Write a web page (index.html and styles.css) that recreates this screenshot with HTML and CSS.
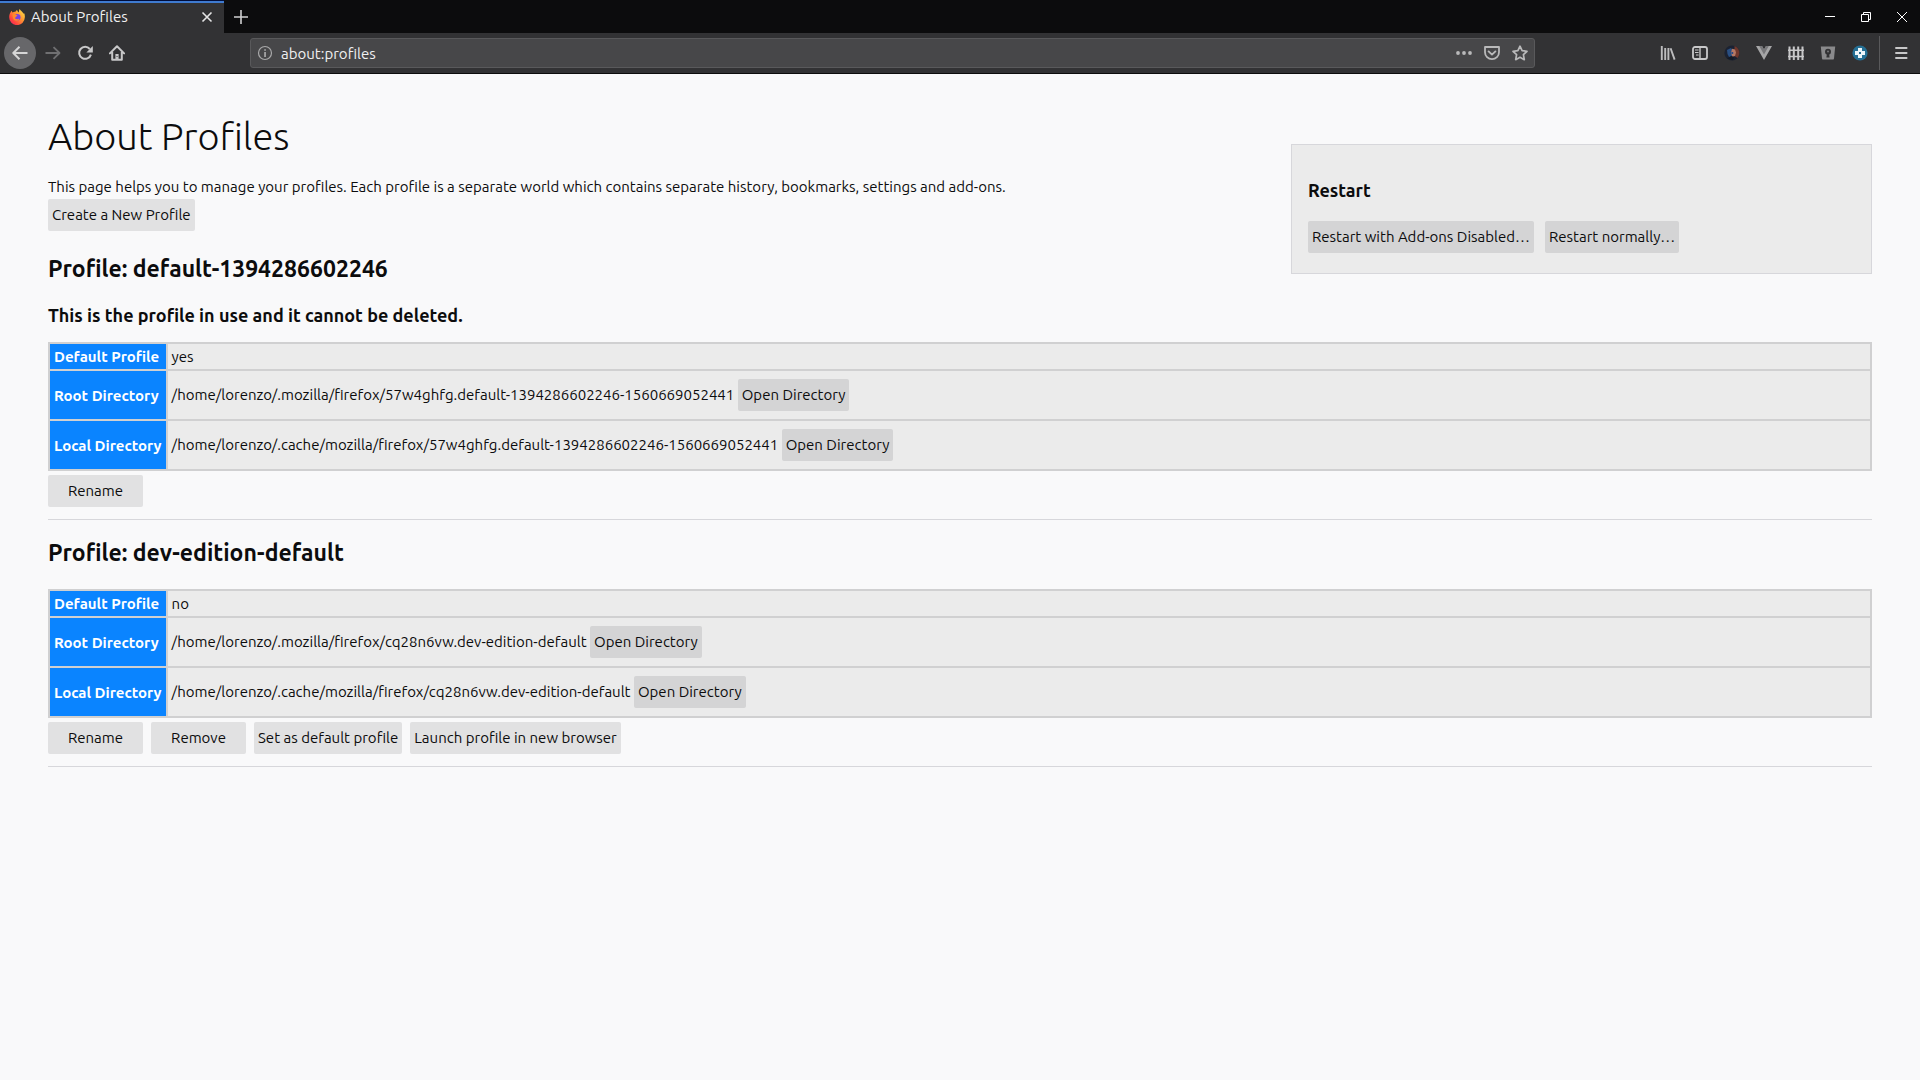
FILE: index.html
```html
<!DOCTYPE html>
<html lang="en">
<head>
<meta charset="UTF-8">
<meta name="viewport" content="width=device-width, initial-scale=1.0">
<title>About Profiles</title>
<link rel="stylesheet" href="styles.css">
</head>
<body>

<header class="browser">
    <div class="tab-bar">
        <div class="tab">
            <svg class="favicon" width="16" height="16" viewBox="0 0 16 16">
                <defs>
                    <linearGradient id="flame" x1="1" y1="0" x2="0" y2="1">
                        <stop offset="0" stop-color="#fff04f"/>
                        <stop offset="0.4" stop-color="#ff9a30"/>
                        <stop offset="0.75" stop-color="#ff4040"/>
                        <stop offset="1" stop-color="#e9207c"/>
                    </linearGradient>
                </defs>
                <path d="M1.6 3.2 C1.8 2.6 2.4 2 2.7 1.8 C2.8 2.6 3.2 3.1 3.6 3.4 C4.6 2.8 5.2 2.7 6.2 2.9 C6.8 1.8 7.4 1.3 8.2 1 C8 2 8.6 2.6 10 3.4 C10 2 10 1 10.6 0 C11.6 1.8 13.6 2.8 14.6 4.8 C15 4.6 15 4.2 14.9 3.8 C15.8 5.4 16 7 15.8 8.6 A7.8 7.6 0 0 1 .2 8.4 C.1 6.4 .6 4.8 1.6 3.2z" fill="url(#flame)"/>
                <circle cx="8.2" cy="8.3" r="3.3" fill="#7542e5"/>
                <path d="M3.4 5.4 C5 4.8 6.6 5 7.4 6 C8.6 6 8.8 6.8 7.6 7.2 C6.6 7.6 6.6 8.8 5.8 9 C7 10.6 9.4 10.4 10.4 9.4 C9.6 12.6 4.8 12.6 4 9z" fill="#ff8a2c"/>
            </svg>
            <span class="tab-title">About Profiles</span>
            <button class="tab-close" aria-label="Close tab">
                <svg width="16" height="16" viewBox="0 0 16 16"><path d="M3.5 3.5l9 9M12.5 3.5l-9 9" stroke="#e4e4e5" stroke-width="1.6" fill="none"/></svg>
            </button>
        </div>
        <button class="new-tab" aria-label="New tab">
            <svg width="16" height="16" viewBox="0 0 16 16"><path d="M8 1v14M1 8h14" stroke="#d0d0d1" stroke-width="1.6" fill="none"/></svg>
        </button>
        <div class="window-controls">
            <button aria-label="Minimize"><svg width="12" height="12" viewBox="0 0 12 12"><path d="M1 5.5h10" stroke="#fff"/></svg></button>
            <button aria-label="Restore"><svg width="12" height="12" viewBox="0 0 12 12"><path d="M1.5 3.5h7v7h-7zM3.5 3.5v-2h7v7h-2" stroke="#fff" fill="none"/></svg></button>
            <button aria-label="Close"><svg width="12" height="12" viewBox="0 0 12 12"><path d="M1 1l10 10M11 1L1 11" stroke="#fff" fill="none"/></svg></button>
        </div>
    </div>

    <nav class="nav-bar">
        <button class="nav-button back" aria-label="Back">
            <svg width="16" height="16" viewBox="0 0 16 16"><path d="M15.5 8H1.5M7.5 1.8L1.3 8l6.2 6.2" stroke="#d6d6d7" stroke-width="2" fill="none" stroke-linejoin="round"/></svg>
        </button>
        <button class="nav-button" aria-label="Forward">
            <svg width="16" height="16" viewBox="0 0 16 16"><path d="M.5 8h14M8.5 2.2L14.5 8l-6 5.8" stroke="#707072" stroke-width="1.8" fill="none" stroke-linejoin="round"/></svg>
        </button>
        <button class="nav-button" aria-label="Reload">
            <svg width="16" height="16" viewBox="0 0 16 16"><path d="M12.8 4A6 6 0 1 0 13.9 9.6" stroke="#c8c8c9" stroke-width="2" fill="none"/><path d="M15.8 1v6.4H9.4z" fill="#c8c8c9"/></svg>
        </button>
        <button class="nav-button" aria-label="Home">
            <svg width="16" height="16" viewBox="0 0 16 16"><path d="M.9 8.4L8 1.3l7.1 7.1M3.2 7.2v7.6h9.6V7.2" stroke="#c8c8c9" stroke-width="2" fill="none" stroke-linejoin="round" stroke-linecap="round"/><path d="M6.4 14V9h3.2v5z" fill="#c8c8c9"/><path d="M7.6 11h.9v1h-.9z" fill="#323234"/></svg>
        </button>

        <div class="url-bar">
            <svg width="16" height="16" viewBox="0 0 16 16"><circle cx="8" cy="8" r="6.5" stroke="#a9a9aa" stroke-width="1.2" fill="none"/><path d="M7.2 7h1.7v5H7.2zM7.2 4.2h1.7v1.6H7.2z" fill="#a9a9aa"/></svg>
            <input type="text" aria-label="Address" value="about:profiles">
            <button class="url-button" aria-label="Page actions">
                <svg width="16" height="16" viewBox="0 0 16 16"><circle cx="2" cy="8" r="1.9" fill="#b9b9ba"/><circle cx="8" cy="8" r="1.9" fill="#b9b9ba"/><circle cx="14" cy="8" r="1.9" fill="#b9b9ba"/></svg>
            </button>
            <button class="url-button" aria-label="Save to Pocket">
                <svg width="16" height="16" viewBox="0 0 16 16"><path d="M1 2h14v5.2a7 7 0 0 1-14 0z" stroke="#b9b9ba" stroke-width="1.8" fill="none" stroke-linejoin="round"/><path d="M4.6 6.4L8 9.6l3.4-3.2" stroke="#b9b9ba" stroke-width="1.9" fill="none" stroke-linecap="round" stroke-linejoin="round"/></svg>
            </button>
            <button class="url-button" aria-label="Bookmark this page">
                <svg width="16" height="16" viewBox="0 0 16 16"><path d="M8 1.2l2.1 4.5 4.9.6-3.6 3.4.9 5L8 12.3l-4.3 2.4.9-5L1 6.3l4.9-.6z" stroke="#b9b9ba" stroke-width="1.7" fill="none" stroke-linejoin="round"/></svg>
            </button>
        </div>

        <button class="nav-button" aria-label="Library">
            <svg width="16" height="16" viewBox="0 0 16 16"><path d="M1.8 1v14M5.2 3v12M8.4 3v12M10.6 3.2l4 11.4" stroke="#bcbcbd" stroke-width="1.9" fill="none"/></svg>
        </button>
        <button class="nav-button" aria-label="Sidebars">
            <svg width="16" height="16" viewBox="0 0 16 16"><rect x="1" y="2" width="14" height="12" rx="2" stroke="#c8c8c9" stroke-width="1.8" fill="none"/><path d="M8 2v12" stroke="#c8c8c9" stroke-width="1.4"/><path d="M3 5h3.6M3 7.5h3.6M4 10h2.6" stroke="#c8c8c9"/></svg>
        </button>
        <button class="nav-button" aria-label="Account">
            <svg width="16" height="16" viewBox="0 0 16 16"><circle cx="8" cy="8" r="7.6" fill="#1b2232"/><path d="M10.5 1a7.5 7.5 0 0 1 3 12l-3-2z" fill="#70372c"/><path d="M3 5l4-2 2 3-1 5-3 1-1.5-3z" fill="#294f83"/><path d="M8 3.8l3 .6 1 3-1 3.6-2.6.8L7 8z" fill="#b67965"/><path d="M7.4 7h1.8v2H7.4z" fill="#2b4b88"/><path d="M3 13.5l4-2.3 3 .8-1 3.2z" fill="#141a26"/></svg>
        </button>
        <button class="nav-button" aria-label="Vue devtools">
            <svg width="16" height="16" viewBox="0 0 16 16"><path d="M0 1h6l2 3.4L10 1h6L8 15z" fill="#a6a6a7"/><path d="M3.2 1H6l2 3.4L10 1h2.8L8 9.4z" fill="#77777a"/></svg>
        </button>
        <button class="nav-button" aria-label="Containers">
            <svg width="16" height="16" viewBox="0 0 16 16"><path d="M1.5 1.5v13.5M5.8 1.5v13.5M10.2 1.5v13.5M14.5 1.5v13.5" stroke="#c8c8c9" stroke-width="2"/><path d="M0 5.2h16M0 11.5h16" stroke="#c8c8c9" stroke-width="1.4"/></svg>
        </button>
        <button class="nav-button" aria-label="Password manager">
            <svg width="16" height="16" viewBox="0 0 16 16"><path d="M.8 1.6h14.4L14 13.4q-.2 1.2-1.4 1.2H3.4Q2.2 14.6 2 13.4z" fill="#8a8a8c"/><circle cx="8" cy="6.8" r="3" fill="#323234"/><path d="M7 8h2l.6 4.6H6.4z" fill="#323234"/><circle cx="8" cy="6.6" r="1" fill="#77777a"/></svg>
        </button>
        <button class="nav-button" aria-label="Extension">
            <svg width="16" height="16" viewBox="0 0 16 16"><circle cx="8" cy="8" r="7.6" fill="#256f94"/><path d="M6 3h4v3h3v4h-3v3H6v-3H3V6h3z" fill="#eef6fa"/><path d="M7 7h2v2H7z" fill="#256f94"/></svg>
        </button>
        <span class="separator"></span>
        <button class="nav-button" aria-label="Menu">
            <svg width="16" height="16" viewBox="0 0 16 16"><path d="M3 3h10.6M3 8h10.6M3 13h10.6" stroke="#c8c8c9" stroke-width="1.9" stroke-linecap="round"/></svg>
        </button>
    </nav>
</header>

<main class="content">
    <section class="restart-box">
        <h3>Restart</h3>
        <div class="actions">
            <button>Restart with Add-ons Disabled…</button>
            <button>Restart normally…</button>
        </div>
    </section>

    <h1>About Profiles</h1>
    <p class="intro">This page helps you to manage your profiles. Each profile is a separate world which contains separate history, bookmarks, settings and add-ons.</p>
    <div class="create">
        <button>Create a New Profile</button>
    </div>

    <section class="profile">
        <h2>Profile: default-1394286602246</h2>
        <h3>This is the profile in use and it cannot be deleted.</h3>
        <table>
            <tr>
                <th scope="row">Default Profile</th>
                <td>yes</td>
            </tr>
            <tr>
                <th scope="row">Root Directory</th>
                <td>/home/lorenzo/.mozilla/firefox/57w4ghfg.default-1394286602246-1560669052441 <button>Open Directory</button></td>
            </tr>
            <tr>
                <th scope="row">Local Directory</th>
                <td>/home/lorenzo/.cache/mozilla/firefox/57w4ghfg.default-1394286602246-1560669052441 <button>Open Directory</button></td>
            </tr>
        </table>
        <div class="actions">
            <button>Rename</button>
        </div>
    </section>

    <section class="profile">
        <h2>Profile: dev-edition-default</h2>
        <table>
            <tr>
                <th scope="row">Default Profile</th>
                <td>no</td>
            </tr>
            <tr>
                <th scope="row">Root Directory</th>
                <td>/home/lorenzo/.mozilla/firefox/cq28n6vw.dev-edition-default <button>Open Directory</button></td>
            </tr>
            <tr>
                <th scope="row">Local Directory</th>
                <td>/home/lorenzo/.cache/mozilla/firefox/cq28n6vw.dev-edition-default <button>Open Directory</button></td>
            </tr>
        </table>
        <div class="actions">
            <button>Rename</button>
            <button>Remove</button>
            <button>Set as default profile</button>
            <button>Launch profile in new browser</button>
        </div>
    </section>
</main>

</body>
</html>
```
FILE: styles.css
```css
* {
    box-sizing: border-box;
}
body {
    margin: 0;
    background-color: #f9f9fa;
    color: #0c0c0d;
    font-family: Ubuntu, "Open Sans", sans-serif;
    font-size: 15px;
}
button {
    font-family: inherit;
    font-size: 15px;
    color: inherit;
    border: none;
    cursor: pointer;
}

/* Browser chrome */
.browser {
    background-color: #323234;
    border-bottom: 1px solid #0c0c0d;
}
.browser button {
    display: flex;
    align-items: center;
    justify-content: center;
    padding: 0;
    background: none;
}
.browser svg {
    flex: none;
}
.tab-bar {
    display: flex;
    height: 33px;
    background-color: #0c0c0d;
}
.tab {
    display: flex;
    align-items: center;
    width: 224px;
    padding: 0 9px;
    background-color: #323234;
    box-shadow: inset 0 1px #000d3a, inset 0 3px #3f7bd0;
    color: #f0f0f1;
}
.tab-title {
    flex: 1;
    margin-left: 6px;
}
.new-tab {
    width: 34px;
}
.window-controls {
    display: flex;
    margin-left: auto;
}
.window-controls button {
    width: 36px;
}
.nav-bar {
    display: flex;
    align-items: center;
    height: 40px;
    padding: 0 3px 0 4px;
}
.nav-button {
    flex: none;
    width: 32px;
    height: 32px;
}
.browser .back {
    margin-right: 1px;
    border-radius: 50%;
    background-color: #67676a;
}
.url-bar {
    display: flex;
    flex: 1;
    align-items: center;
    height: 30px;
    margin: 0 117px;
    padding: 0 0 0 6px;
    border: 1px solid #59595b;
    border-radius: 3px;
    background-color: #474749;
}
.url-bar input {
    flex: 1;
    min-width: 0;
    padding: 0 8px;
    border: none;
    background: none;
    color: #f0f0f1;
    font-family: inherit;
    font-size: 15px;
}
.url-button {
    width: 28px;
    height: 28px;
}
.separator {
    width: 1px;
    height: 34px;
    margin: 0 5px 0 3px;
    background-color: #59595b;
}

/* Page */
.content {
    padding: 38px 48px;
}
.content button {
    height: 32px;
    padding: 0 4px 1px;
    border-radius: 2px;
    background-color: #e1e1e2;
}
h1 {
    margin: 0 0 15px;
    font-size: 38px;
    font-weight: 300;
    line-height: 48px;
}
h2 {
    margin: 17px 0 20px;
    font-size: 23px;
    line-height: 32px;
}
h3 {
    margin: 0 0 17px;
    font-size: 18px;
    line-height: 20px;
}
.intro {
    margin: 0;
    line-height: 24px;
}
.create {
    padding-bottom: 5px;
}
.create button {
    display: block;
}
.actions {
    display: flex;
    gap: 8px;
}
.restart-box {
    float: right;
    width: 30%;
    min-width: 581px;
    margin-top: 32px;
    padding: 35px 16px 20px;
    border: 1px solid #d7d7db;
    background-color: #ebebeb;
}
.restart-box h3 {
    margin-bottom: 21px;
}
.restart-box .actions {
    gap: 11px;
}
.content .restart-box button,
.content td button {
    background-color: #d4d4d5;
}
.profile {
    border-bottom: 1px solid #d7d7db;
}
.profile .actions {
    padding: 4px 0 12px;
}
.profile .actions button {
    min-width: 95px;
}
table {
    width: 100%;
    border-collapse: collapse;
    background-color: #ebebeb;
}
th,
td {
    padding: 3px 4px;
    border: 2px solid #d0d0d1;
    line-height: 19px;
    text-align: left;
}
th {
    width: 117px;
    background-color: #0a84ff;
    color: #fff;
    white-space: nowrap;
}
td button {
    margin: 5px 0;
}
```
